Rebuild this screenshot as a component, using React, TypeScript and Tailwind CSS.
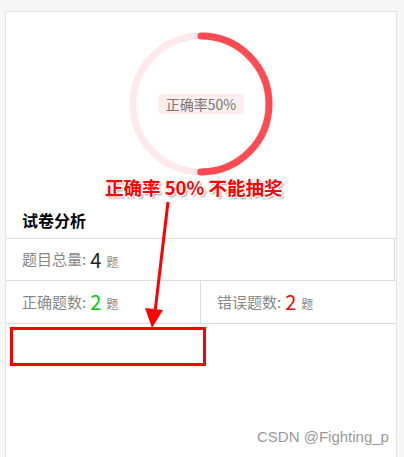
import React from "react";

const CJK = '"Noto Sans CJK SC", "Noto Sans", sans-serif';

function Ring() {
  const r = 68;
  const c = 2 * Math.PI * r;
  return (
    <div className="relative w-[144px] h-[144px]">
      <svg width="144" height="144" viewBox="0 0 144 144">
        <circle cx="72" cy="72" r={r} fill="none" stroke="#ffe9ea" strokeWidth="7" />
        <circle
          cx="72"
          cy="72"
          r={r}
          fill="none"
          stroke="#ff4b51"
          strokeWidth="7"
          strokeLinecap="round"
          strokeDasharray={`${c / 2} ${c}`}
          transform="rotate(-90 72 72)"
        />
      </svg>
      <div className="absolute inset-0 flex items-center justify-center">
        <span className="bg-[#fdeded] rounded-[4px] px-[8px] h-[20px] leading-[20px] text-[14px] text-[#777]">
          正确率50%
        </span>
      </div>
    </div>
  );
}

export default function App() {
  return (
    <div className="relative w-[404px] h-[457px] overflow-hidden bg-[#f7f7f7] pt-[11px] pl-[5px]" style={{ fontFamily: CJK }}>
      <div className="w-[392px] h-[460px] bg-white border border-[#e3e3e3]">
        <div className="flex justify-center pt-[20px]">
          <Ring />
        </div>
        <div className="pl-[16px] pt-[34px] h-[62px] text-[16px] font-bold text-black leading-[20px]">试卷分析</div>
        <div className="border-t border-[#ddd]">
          <div className="h-[42px] flex items-center pl-[16px] border-r border-b border-[#ddd] mr-[1px]">
            <span className="text-[15px] text-[#888]">题目总量: </span>
            <span className="text-[20px] text-[#222] ml-[4px] leading-none">4</span>
            <span className="text-[12px] text-[#888] ml-[5px] mt-[4px]">题</span>
          </div>
          <div className="h-[43px] flex border-b border-[#ddd]">
            <div className="w-[195px] flex items-center pl-[16px] border-r border-[#ddd]">
              <span className="text-[15px] text-[#888]">正确题数: </span>
              <span className="text-[20px] text-[#00c800] ml-[4px] leading-none">2</span>
              <span className="text-[12px] text-[#888] ml-[5px] mt-[4px]">题</span>
            </div>
            <div className="flex-1 flex items-center pl-[16px]">
              <span className="text-[15px] text-[#888]">错误题数: </span>
              <span className="text-[20px] text-[#ff0000] ml-[4px] leading-none">2</span>
              <span className="text-[12px] text-[#888] ml-[5px] mt-[4px]">题</span>
            </div>
          </div>
        </div>
      </div>

      {/* annotation overlays */}
      <div
        className="absolute left-[105px] top-[175px] text-[18.5px] font-bold text-[#ff0000] leading-[24px] whitespace-nowrap"
        style={{ textShadow: "1px 1px 0 #fff, -1px -1px 0 #fff, 1px -1px 0 #fff, -1px 1px 0 #fff, 2px 2px 2px #999" }}
      >
        正确率 50% 不能抽奖
      </div>
      <svg className="absolute left-0 top-0" width="404" height="457">
        <line x1="168" y1="202" x2="155" y2="312" stroke="#ff0000" strokeWidth="3" />
        <polygon points="152,328 145,308 163,310" fill="#ff0000" />
      </svg>
      <div className="absolute left-[10px] top-[327px] w-[196px] h-[39px] border-[3px] border-[#ff0000]" />
      <div className="absolute left-[257px] top-[427px] text-[15px] text-[#999] leading-[20px]" style={{ fontFamily: '"Liberation Sans", sans-serif' }}>
        CSDN @Fighting_p
      </div>
    </div>
  );
}
